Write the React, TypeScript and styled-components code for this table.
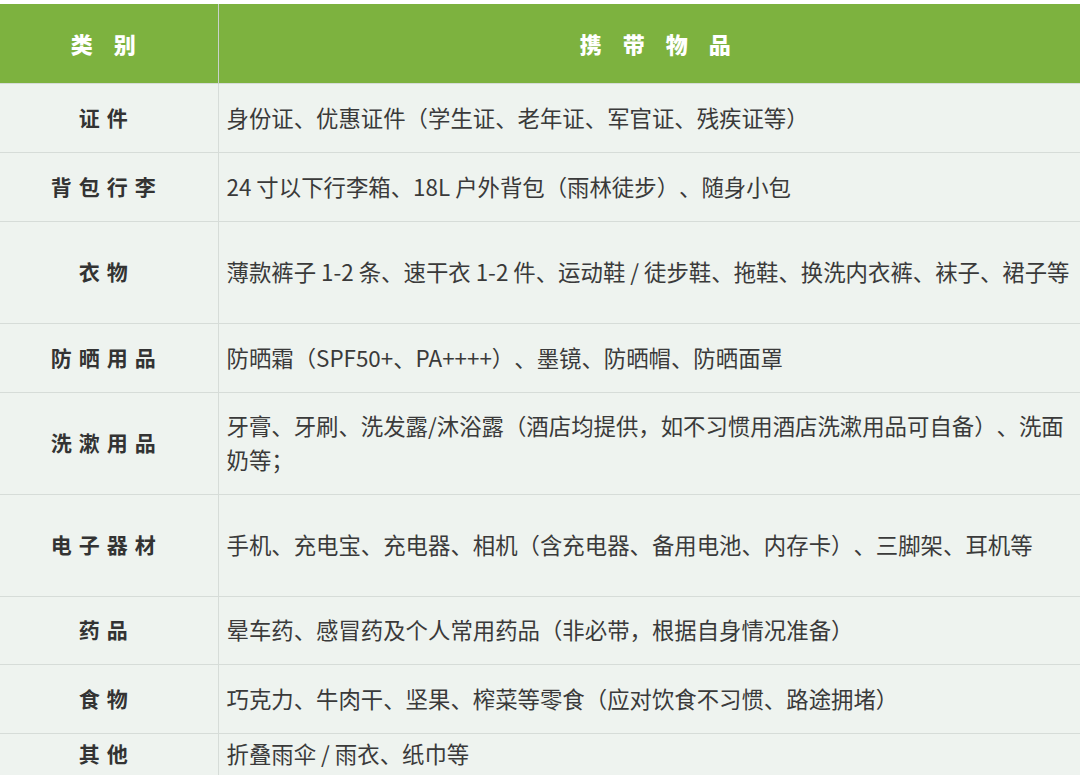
import React from "react";
import styled, { createGlobalStyle } from "styled-components";

const GlobalStyle = createGlobalStyle`
  html, body {
    margin: 0;
    padding: 0;
    background: #ffffff;
    overflow: hidden;
  }
  body {
    font-family: "Noto Sans CJK SC", "Noto Sans", sans-serif;
    text-spacing-trim: space-all;
  }
`;

const Page = styled.div`
  padding-top: 4px;
  width: 1080px;
  overflow: hidden;
`;

const Table = styled.table`
  width: 1092px;
  border-collapse: collapse;
  table-layout: fixed;
  background: #eef3ef;
`;

const HeadCell = styled.th<{ $left?: boolean }>`
  height: 79px;
  padding: 0 ${(p) => (p.$left ? "11px" : "0")} 0 0;
  background: #7db23f;
  color: #ffffff;
  font-size: 22px;
  font-weight: 900;
  letter-spacing: 21px;
  text-indent: 21px;
  text-align: center;
  border-right: ${(p) => (p.$left ? "1px solid #c9d2cc" : "none")};
  box-sizing: border-box;
`;

const Row = styled.tr<{ $h: number }>`
  height: ${(p) => p.$h}px;
  border-top: 1px solid #d6dcd8;
`;

const Label = styled.td`
  width: 218px;
  box-sizing: border-box;
  padding: 0 11px 2px 0;
  text-align: center;
  vertical-align: middle;
  font-size: 21px;
  font-weight: 700;
  color: #333333;
  letter-spacing: 7px;
  text-indent: 7px;
  border-right: 1px solid #d6dcd8;
`;

const Items = styled.td`
  padding: 0 18px 2px 8px;
  vertical-align: middle;
  font-size: 22.4px;
  line-height: 34px;
  color: #3a3a3a;
`;

const rows = [
  { label: "证件", h: 69, text: "身份证、优惠证件（学生证、老年证、军官证、残疾证等）" },
  { label: "背包行李", h: 69, text: "24 寸以下行李箱、18L 户外背包（雨林徒步）、随身小包" },
  {
    label: "衣物",
    h: 102,
    text: "薄款裤子 1-2 条、速干衣 1-2 件、运动鞋 / 徒步鞋、拖鞋、换洗内衣裤、袜子、裙子等",
  },
  { label: "防晒用品", h: 69, text: "防晒霜（SPF50+、PA++++）、墨镜、防晒帽、防晒面罩" },
  {
    label: "洗漱用品",
    h: 102,
    text: "牙膏、牙刷、洗发露/沐浴露（酒店均提供，如不习惯用酒店洗漱用品可自备）、洗面奶等；",
  },
  {
    label: "电子器材",
    h: 102,
    text: "手机、充电宝、充电器、相机（含充电器、备用电池、内存卡）、三脚架、耳机等",
  },
  { label: "药品", h: 68, text: "晕车药、感冒药及个人常用药品（非必带，根据自身情况准备）" },
  { label: "食物", h: 69, text: "巧克力、牛肉干、坚果、榨菜等零食（应对饮食不习惯、路途拥堵）" },
  { label: "其他", h: 42, text: "折叠雨伞 / 雨衣、纸巾等" },
];

const App: React.FC = () => {
  return (
    <Page>
      <GlobalStyle />
      <Table>
        <colgroup>
          <col style={{ width: 218 }} />
          <col />
        </colgroup>
        <thead>
          <tr>
            <HeadCell $left>类别</HeadCell>
            <HeadCell>携带物品</HeadCell>
          </tr>
        </thead>
        <tbody>
          {rows.map((row) => (
            <Row key={row.label} $h={row.h}>
              <Label>{row.label}</Label>
              <Items>{row.text}</Items>
            </Row>
          ))}
        </tbody>
      </Table>
    </Page>
  );
};

export default App;
